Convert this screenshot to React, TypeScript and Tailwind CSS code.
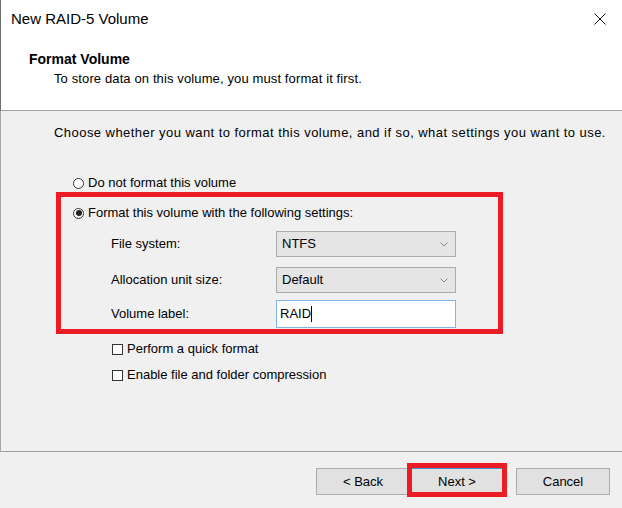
function Radio({ checked }: { checked?: boolean }) {
  return (
    <span className="w-[11px] h-[11px] rounded-full border border-[#333] bg-white flex items-center justify-center">
      {checked && <span className="w-[6px] h-[6px] rounded-full bg-[#222]" />}
    </span>
  )
}

function Chevron() {
  return (
    <svg width="8" height="5" viewBox="0 0 8 5" className="shrink-0">
      <path d="M0.5 0.5 L4 4 L7.5 0.5" fill="none" stroke="#8a8a8a" strokeWidth="1" />
    </svg>
  )
}

function Select({ value }: { value: string }) {
  return (
    <div className="w-[180px] h-[26px] bg-[#e5e5e5] border border-[#acacac] flex items-center justify-between pl-[5px] pr-[7px]">
      <span>{value}</span>
      <Chevron />
    </div>
  )
}

function App() {
  return (
    <div className="w-[622px] h-[508px] flex flex-col bg-[#f0f0f0] font-['Liberation_Sans',Arial,sans-serif] text-[13px] leading-[16px] text-black overflow-hidden">

      <div className="h-[111px] shrink-0 bg-white border-l border-l-[#6d6d6d] border-b border-b-[#a0a0a0]">
        <div className="h-[38px] flex items-center justify-between pl-[10px] pr-[16px]">
          <span className="text-[15px]">New RAID-5 Volume</span>
          <svg width="12" height="12" viewBox="0 0 12 12">
            <path d="M0.5 0.5 L11.5 11.5 M11.5 0.5 L0.5 11.5" stroke="#111" strokeWidth="1" />
          </svg>
        </div>
        <p className="mt-[13px] pl-[28px] font-bold text-[14px]">Format Volume</p>
        <p className="mt-[4px] pl-[53px] tracking-[0.12px]">To store data on this volume, you must format it first.</p>
      </div>

      <div className="flex-1 border-l border-l-[#a6a6a6] pt-[14px] pl-[53px]">
        <p className="tracking-[0.45px] whitespace-nowrap">Choose whether you want to format this volume, and if so, what settings you want to use.</p>

        <div className="mt-[34px] ml-[19px] h-[16px] flex items-center gap-[4px]">
          <Radio />
          <span>Do not format this volume</span>
        </div>

        <div className="mt-[1px] ml-[2px] w-[447px] border-[5px] border-[#ed1c24] pt-[8px] pl-[12px] pb-[1px]">
          <div className="h-[16px] flex items-center gap-[4px]">
            <Radio checked />
            <span>Format this volume with the following settings:</span>
          </div>

          <div className="ml-[38px]">
            <div className="mt-[10px] flex items-center">
              <span className="w-[165px]">File system:</span>
              <Select value="NTFS" />
            </div>
            <div className="mt-[10px] flex items-center">
              <span className="w-[165px]">Allocation unit size:</span>
              <Select value="Default" />
            </div>
            <div className="mt-[7px] flex items-center">
              <span className="w-[165px]">Volume label:</span>
              <div className="w-[180px] h-[28px] bg-white border border-[#7eb4ea] pl-[3px] flex items-center">
                <span>RAID</span>
                <span className="w-px h-[16px] bg-black" />
              </div>
            </div>
          </div>
        </div>

        <div className="mt-[7px] ml-[58px] h-[16px] flex items-center gap-[4px]">
          <span className="w-[11px] h-[11px] border border-[#333] bg-white" />
          <span>Perform a quick format</span>
        </div>
        <div className="mt-[10px] ml-[58px] h-[16px] flex items-center gap-[4px]">
          <span className="w-[11px] h-[11px] border border-[#333] bg-white" />
          <span>Enable file and folder compression</span>
        </div>
      </div>

      <div className="h-[57px] shrink-0 border-t border-[#a0a0a0] flex justify-end items-start pt-[16px] pr-[12px]">
        <button className="w-[94px] h-[27px] bg-[#e1e1e1] border border-[#adadad]">&lt; Back</button>
        <div className="relative">
          <button className="w-[94px] h-[27px] bg-[#e1e1e1] border border-[#3d95e0]">Next &gt;</button>
          <div className="absolute -left-[3px] -right-[3px] -top-[5px] -bottom-[2px] border-[5px] border-[#ed1c24]" />
        </div>
        <button className="ml-[12px] w-[94px] h-[27px] bg-[#e1e1e1] border border-[#adadad]">Cancel</button>
      </div>
    </div>
  )
}

export default App
